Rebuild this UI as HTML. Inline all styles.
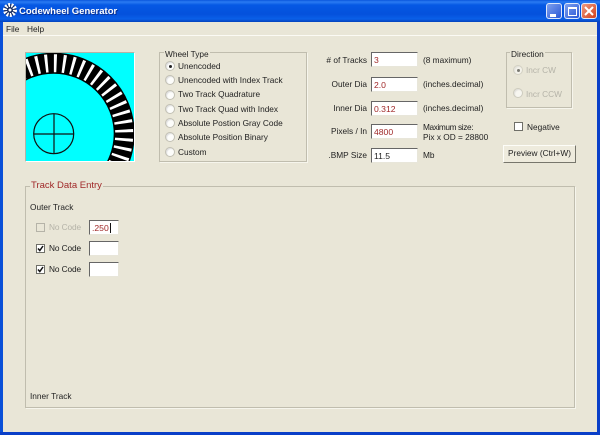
<!DOCTYPE html>
<html><head><meta charset="utf-8"><style>
html,body{margin:0;padding:0;width:600px;height:435px;overflow:hidden;background:#e9e6d7}
#w{position:relative;width:600px;height:435px;overflow:hidden;font:8.3px/12px "Liberation Sans",sans-serif;color:#222;background:#e9e6d7;filter:blur(.3px)}
#w div,#w span.a{position:absolute;box-sizing:border-box}
.t{white-space:nowrap;height:12px}
.g{border:1px solid #c0bdae;box-shadow:1px 1px 0 #f6f5ec}
.l{background:#e9e6d7;padding:0 1px;white-space:nowrap;height:12px}
.i{background:#fff;border:1px solid #7f9db9;border-top-color:#666;border-left-color:#666;border-right-color:#e8e6da;border-bottom-color:#e8e6da;color:#a02828;padding:1px 0 0 2px;line-height:12px;width:47px;height:15px;font-size:8.6px}
.r{width:10px;height:10px;border-radius:50%;background:#fdfdfb;border:1px solid #c2c0b4;box-shadow:inset 1px 1px 1px #ddd}
.r.s:after{content:"";position:absolute;left:2.5px;top:2.5px;width:3px;height:3px;border-radius:50%;background:#222}
.c{width:9px;height:9px;background:#fff;border:1px solid #6f6f68}
.d{color:#b5b3a8}
.b{background:linear-gradient(#6d96ec,#2b55cf);border:1px solid #dfe8fb;border-radius:3px;width:16px;height:16px;top:3px}
</style></head><body><div id="w">
<div style="left:0;top:0;width:600px;height:22px;background:linear-gradient(#0a56dc 0,#2a7bf2 2px,#0558e4 5px,#0451dc 14px,#0a5fe8 19px,#0442bc 22px)"></div>
<div style="left:0;top:22px;width:3px;height:413px;background:#0a50d8"></div>
<div style="left:597px;top:22px;width:3px;height:413px;background:#0a3fc8"></div>
<div style="left:0;top:432px;width:600px;height:3px;background:#0a3fc8"></div>
<svg style="position:absolute;left:3px;top:3px" width="14" height="14" viewBox="0 0 14 14"><circle cx="7" cy="7" r="6" fill="#152a60"/><circle cx="7" cy="7" r="5" fill="none" stroke="#fff" stroke-width="4" stroke-dasharray="1.8 1.3"/><circle cx="7" cy="7" r="1.5" fill="#fff"/></svg>
<div class="t" style="left:19px;top:5px;color:#fff;font:bold 9.5px/14px 'Liberation Sans',sans-serif;text-shadow:1px 1px 0 #0a2f90;height:14px">Codewheel Generator</div>
<div class="b" style="left:546px;background:linear-gradient(135deg,#7ea0ee,#2a58d6)"><div style="left:3px;top:10px;width:6px;height:3px;background:#fff"></div></div>
<div class="b" style="left:564px;background:linear-gradient(135deg,#7ea0ee,#2a58d6)"><div style="left:3px;top:3px;width:9px;height:9px;border:1px solid #fff;border-top-width:2px"></div></div>
<div class="b" style="left:581px;background:linear-gradient(135deg,#ee9a80,#d0401c)"><svg style="position:absolute;left:2px;top:2px" width="10" height="10"><path d="M1 1L9 9M9 1L1 9" stroke="#fff" stroke-width="2"/></svg></div>
<div style="left:3px;top:35px;width:594px;height:1px;background:#fbfaf4"></div>
<div class="t" style="left:6px;top:23px">File</div>
<div class="t" style="left:27px;top:23px">Help</div>

<div style="left:25px;top:52px;width:110px;height:110px;background:#0ff;border:1px solid #b5b3a6;border-right-color:#fff;border-bottom-color:#fff;overflow:hidden">
<svg style="position:absolute;left:-1px;top:-1px" width="110" height="110" viewBox="25 52 110 110"><circle cx="53.7" cy="133.7" r="70.5" fill="none" stroke="#000" stroke-width="21"/><circle cx="53.7" cy="133.7" r="70.5" fill="none" stroke="#fff" stroke-width="18" stroke-dasharray="2.8 6.06" stroke-dashoffset="4.4"/><circle cx="53.7" cy="133.7" r="20" fill="none" stroke="#111" stroke-width="1.2"/><path d="M33.7 134H73.7M54 113.7V153.7" stroke="#111" stroke-width="1.2"/></svg></div>

<div class="g" style="left:159px;top:52px;width:148px;height:110px"></div>
<div class="l" style="left:164px;top:48px">Wheel Type</div>
<div class="r s" style="left:165px;top:61px"></div><div class="t" style="left:178px;top:60px">Unencoded</div>
<div class="r" style="left:165px;top:75px"></div><div class="t" style="left:178px;top:74px">Unencoded with Index Track</div>
<div class="r" style="left:165px;top:90px"></div><div class="t" style="left:178px;top:88px">Two Track Quadrature</div>
<div class="r" style="left:165px;top:104px"></div><div class="t" style="left:178px;top:103px">Two Track Quad with Index</div>
<div class="r" style="left:165px;top:118px"></div><div class="t" style="left:178px;top:117px">Absolute Postion Gray Code</div>
<div class="r" style="left:165px;top:132px"></div><div class="t" style="left:178px;top:131px">Absolute Position Binary</div>
<div class="r" style="left:165px;top:147px"></div><div class="t" style="left:178px;top:146px">Custom</div>

<div class="t" style="left:300px;width:67px;text-align:right;top:54px"># of Tracks</div>
<div class="t" style="left:300px;width:67px;text-align:right;top:78px">Outer Dia</div>
<div class="t" style="left:300px;width:67px;text-align:right;top:102px">Inner Dia</div>
<div class="t" style="left:300px;width:67px;text-align:right;top:125px">Pixels / In</div>
<div class="t" style="left:300px;width:67px;text-align:right;top:149px">.BMP Size</div>
<div class="i" style="left:371px;top:52px">3</div>
<div class="i" style="left:371px;top:77px">2.0</div>
<div class="i" style="left:371px;top:101px">0.312</div>
<div class="i" style="left:371px;top:124px">4800</div>
<div class="i" style="left:371px;top:148px;color:#222">11.5</div>
<div class="t" style="left:423px;top:54px">(8 maximum)</div>
<div class="t" style="left:423px;top:78px">(inches.decimal)</div>
<div class="t" style="left:423px;top:102px">(inches.decimal)</div>
<div class="t" style="left:423px;top:121px;letter-spacing:-.4px">Maximum size:</div>
<div class="t" style="left:423px;top:131px">Pix x OD = 28800</div>
<div class="t" style="left:423px;top:149px">Mb</div>

<div class="g" style="left:506px;top:52px;width:66px;height:56px"></div>
<div class="l" style="left:510px;top:48px">Direction</div>
<div class="r s" style="left:513px;top:65px;opacity:.55"></div><div class="t d" style="left:526px;top:64px">Incr CW</div>
<div class="r" style="left:513px;top:88px;opacity:.7"></div><div class="t d" style="left:526px;top:88px">Incr CCW</div>
<div class="c" style="left:514px;top:122px"></div><div class="t" style="left:527px;top:121px">Negative</div>
<div style="left:503px;top:145px;width:73px;height:18px;background:#eeebdd;border:1px solid #fdfdf8;border-right-color:#77766c;border-bottom-color:#77766c;text-align:center;line-height:15px;white-space:nowrap">Preview (Ctrl+W)</div>

<div class="g" style="left:25px;top:186px;width:550px;height:222px"></div>
<div class="l" style="left:30px;top:180px;color:#a02828;font-size:9.5px">Track Data Entry</div>
<div class="t" style="left:30px;top:201px">Outer Track</div>
<div class="c" style="left:36px;top:223px;border-color:#b5b3a8;background:#e9e6d7"></div><div class="t d" style="left:49px;top:221px;letter-spacing:-.1px">No Code</div>
<div class="i" style="left:89px;top:220px;width:30px;padding-top:1px">.250<span style="border-left:1px solid #111;margin-left:1px"></span></div>
<div class="c" style="left:36px;top:244px"><svg style="position:absolute;left:0;top:0" width="7" height="7"><path d="M1 3.5L2.8 5.5L6 1" fill="none" stroke="#111" stroke-width="1.5"/></svg></div><div class="t" style="left:49px;top:242px;letter-spacing:-.1px">No Code</div>
<div class="i" style="left:89px;top:241px;width:30px"></div>
<div class="c" style="left:36px;top:265px"><svg style="position:absolute;left:0;top:0" width="7" height="7"><path d="M1 3.5L2.8 5.5L6 1" fill="none" stroke="#111" stroke-width="1.5"/></svg></div><div class="t" style="left:49px;top:263px;letter-spacing:-.1px">No Code</div>
<div class="i" style="left:89px;top:262px;width:30px"></div>
<div class="t" style="left:30px;top:390px">Inner Track</div>
</div></body></html>
